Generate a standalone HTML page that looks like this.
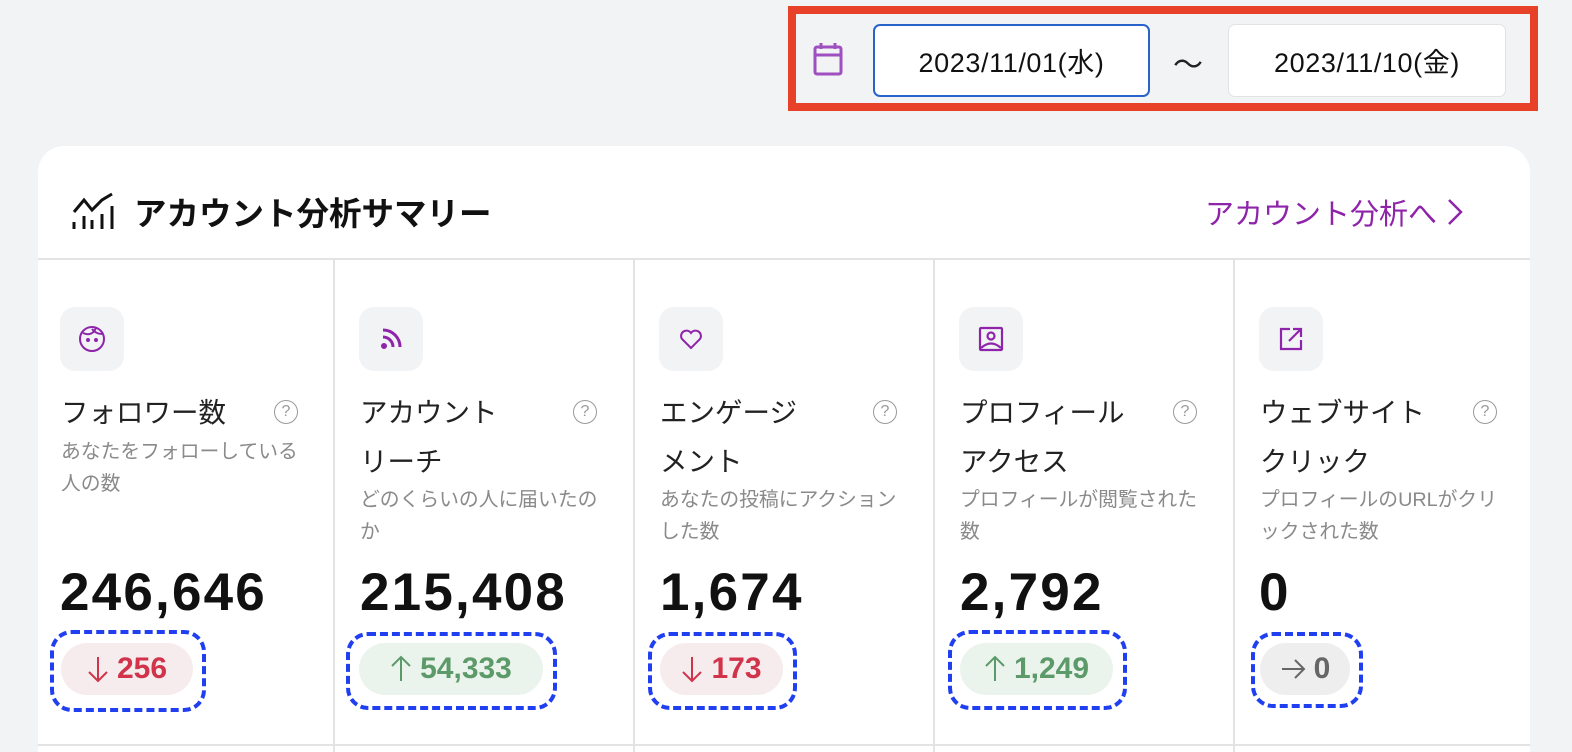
<!DOCTYPE html>
<html><head><meta charset="utf-8"><style>
*{box-sizing:border-box;margin:0;padding:0}
html,body{width:1572px;height:752px;overflow:hidden}
body{background:#f2f3f5;font-family:"Liberation Sans","Noto Sans CJK JP",sans-serif;position:relative;color:#111}
.red{position:absolute;left:788px;top:6px;width:750px;height:105px;border:8px solid #e8412a}
.inp{position:absolute;top:24px;height:73px;background:#fff;border-radius:7px;font-size:27px;letter-spacing:0.6px;display:flex;align-items:center;justify-content:center;color:#111}
.card{position:absolute;left:38px;top:146px;width:1492px;height:640px;background:#fff;border-radius:26px}
.hdr{position:absolute;left:38px;top:258px;width:1492px;height:2px;background:#e3e3e3}
.vl{position:absolute;top:260px;width:2px;height:492px;background:#e3e3e3}
.bot{position:absolute;left:38px;top:744px;width:1492px;height:2px;background:#e3e3e3}
.ib{position:absolute;top:307px;width:64px;height:64px;border-radius:15px;background:#f2f3f5;display:flex;align-items:center;justify-content:center}
.t{position:absolute;top:388px;font-size:27.5px;line-height:49px;color:#222}
.q{position:absolute;top:400px;width:24px;height:24px;border:1.6px solid #999;border-radius:50%;font-size:16px;color:#999;text-align:center;line-height:21px}
.d{position:absolute;font-size:19.8px;line-height:32px;color:#8a8a8a;width:260px;white-space:nowrap}
.n{position:absolute;top:562px;font-size:53px;font-weight:bold;letter-spacing:2.2px;color:#111}
.dash{position:absolute;border:4px dashed #1f3ff0;border-radius:22px}
.pill{position:absolute;top:643px;height:52px;border-radius:26px;font-size:30px;font-weight:bold;display:flex;align-items:center;justify-content:center;gap:8px}
.r{background:#f6ecee;color:#d0334a}.g{background:#ebf4ec;color:#5d9a69}.k{background:#eeeeee;color:#666}
</style></head><body>
<div class="red"></div>
<svg style="position:absolute;left:813px;top:42px" width="30" height="34" viewBox="0 0 30 34"><rect x="2" y="5" width="26" height="27" rx="2" fill="none" stroke="#a04fc0" stroke-width="3"/><line x1="2" y1="13" x2="28" y2="13" stroke="#a04fc0" stroke-width="3"/><line x1="8" y1="1" x2="8" y2="7" stroke="#a04fc0" stroke-width="3"/><line x1="22" y1="1" x2="22" y2="7" stroke="#a04fc0" stroke-width="3"/></svg>
<div class="inp" style="left:873px;width:277px;border:2.5px solid #2a62cc">2023/11/01(水)</div>
<div style="position:absolute;left:1173px;top:40px;font-size:30px;color:#222">～</div>
<div class="inp" style="left:1228px;width:278px;border:1.5px solid #e3e3e3">2023/11/10(金)</div>

<div class="card"></div>
<svg style="position:absolute;left:72px;top:192px" width="44" height="38" viewBox="0 0 44 38"><polyline points="2,20 12,8 20,18 30,8 40,2" fill="none" stroke="#111" stroke-width="3"/><g stroke="#111" stroke-width="3"><line x1="2" y1="30" x2="2" y2="37"/><line x1="12" y1="24" x2="12" y2="37"/><line x1="20" y1="28" x2="20" y2="37"/><line x1="30" y1="22" x2="30" y2="37"/><line x1="40" y1="14" x2="40" y2="37"/></g></svg>
<div style="position:absolute;left:134px;top:188px;font-size:32.5px;font-weight:bold;color:#111">アカウント分析サマリー</div>
<div style="position:absolute;left:1205px;top:191px;font-size:29px;color:#8e24aa">アカウント分析へ</div>
<svg style="position:absolute;left:1445px;top:197px" width="20" height="30" viewBox="0 0 20 30"><polyline points="4,3 16,15 4,27" fill="none" stroke="#8e24aa" stroke-width="2.5"/></svg>
<div class="hdr"></div>
<div class="vl" style="left:333px"></div><div class="vl" style="left:633px"></div><div class="vl" style="left:933px"></div><div class="vl" style="left:1233px"></div>
<div class="bot"></div>

<!-- col1 -->
<div class="ib" style="left:60px"><svg width="28" height="28" viewBox="0 0 28 28" fill="none" stroke="#8e24aa" stroke-width="2"><circle cx="14" cy="14" r="12"/><path d="M5 8 Q14 12 18 3 M14 4 Q18 9 24 9"/><circle cx="10" cy="15" r="1" fill="#8e24aa"/><circle cx="18" cy="15" r="1" fill="#8e24aa"/></svg></div>
<div class="t" style="left:61px">フォロワー数</div><div class="q" style="left:274px">?</div>
<div class="d" style="left:61px;top:436px">あなたをフォローしている<br>人の数</div>
<div class="n" style="left:60px">246,646</div>
<div class="dash" style="left:50px;top:630px;width:156px;height:82px"></div>
<div class="pill r" style="left:61px;width:132px"><svg width="22" height="28" viewBox="0 0 22 28"><path d="M11 2V26M2 17L11 26L20 17" fill="none" stroke="#d0334a" stroke-width="2"/></svg>256</div>

<!-- col2 -->
<div class="ib" style="left:359px"><svg width="28" height="28" viewBox="0 0 28 28" fill="none" stroke="#8e24aa" stroke-width="3"><path d="M6 5 A17 17 0 0 1 23 22"/><path d="M6 12 A10 10 0 0 1 16 22"/><circle cx="7" cy="21" r="1.5" fill="#8e24aa"/></svg></div>
<div class="t" style="left:360px">アカウント<br>リーチ</div><div class="q" style="left:573px">?</div>
<div class="d" style="left:360px;top:484px">どのくらいの人に届いたの<br>か</div>
<div class="n" style="left:360px">215,408</div>
<div class="dash" style="left:346px;top:632px;width:211px;height:78px"></div>
<div class="pill g" style="left:359px;width:184px"><svg width="22" height="28" viewBox="0 0 22 28"><path d="M11 26V2M2 11L11 2L20 11" fill="none" stroke="#5d9a69" stroke-width="2"/></svg>54,333</div>

<!-- col3 -->
<div class="ib" style="left:659px"><svg width="28" height="28" viewBox="0 0 28 28" fill="none" stroke="#8e24aa" stroke-width="2"><path d="M14 23 L5 14 A5 5 0 0 1 14 8 A5 5 0 0 1 23 14 Z"/></svg></div>
<div class="t" style="left:660px">エンゲージ<br>メント</div><div class="q" style="left:873px">?</div>
<div class="d" style="left:660px;top:484px">あなたの投稿にアクション<br>した数</div>
<div class="n" style="left:660px">1,674</div>
<div class="dash" style="left:648px;top:632px;width:149px;height:78px"></div>
<div class="pill r" style="left:660px;width:123px"><svg width="22" height="28" viewBox="0 0 22 28"><path d="M11 2V26M2 17L11 26L20 17" fill="none" stroke="#d0334a" stroke-width="2"/></svg>173</div>

<!-- col4 -->
<div class="ib" style="left:959px"><svg width="28" height="28" viewBox="0 0 28 28" fill="none" stroke="#8e24aa" stroke-width="2.2"><rect x="3" y="3" width="22" height="22" rx="1"/><circle cx="14" cy="11" r="3.5"/><path d="M4 23 Q14 14 24 23"/></svg></div>
<div class="t" style="left:960px">プロフィール<br>アクセス</div><div class="q" style="left:1173px">?</div>
<div class="d" style="left:960px;top:484px">プロフィールが閲覧された<br>数</div>
<div class="n" style="left:960px">2,792</div>
<div class="dash" style="left:948px;top:630px;width:179px;height:80px"></div>
<div class="pill g" style="left:960px;width:153px"><svg width="22" height="28" viewBox="0 0 22 28"><path d="M11 26V2M2 11L11 2L20 11" fill="none" stroke="#5d9a69" stroke-width="2"/></svg>1,249</div>

<!-- col5 -->
<div class="ib" style="left:1259px"><svg width="28" height="28" viewBox="0 0 28 28" fill="none" stroke="#8e24aa" stroke-width="2.2"><path d="M13 4 H4 V24 H24 V15"/><path d="M12 16 L24 4 M16 4 H24 V12"/></svg></div>
<div class="t" style="left:1260px">ウェブサイト<br>クリック</div><div class="q" style="left:1473px">?</div>
<div class="d" style="left:1260px;top:484px">プロフィールのURLがクリ<br>ックされた数</div>
<div class="n" style="left:1259px">0</div>
<div class="dash" style="left:1251px;top:632px;width:112px;height:76px"></div>
<div class="pill k" style="left:1260px;width:90px"><svg width="26" height="22" viewBox="0 0 26 22"><path d="M2 11H24M15 2L24 11L15 20" fill="none" stroke="#666" stroke-width="2"/></svg>0</div>
</body></html>
